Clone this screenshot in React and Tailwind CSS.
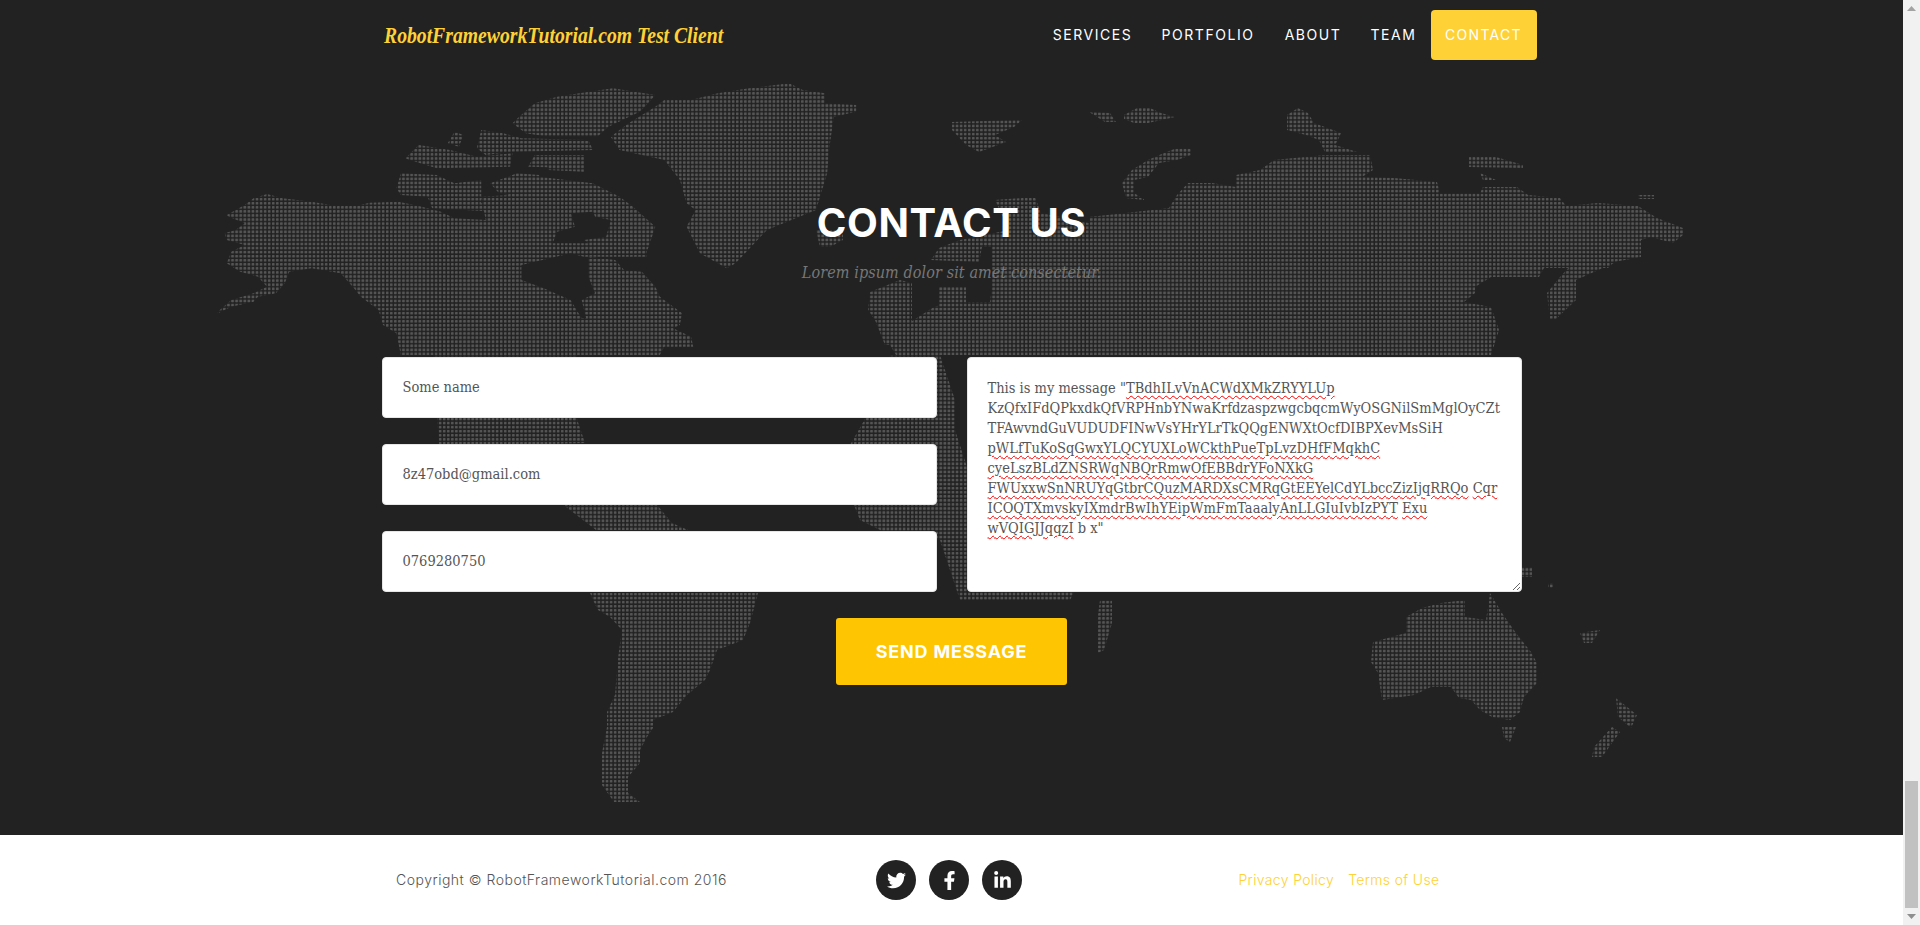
import React from "react";
import { FaTwitter, FaFacebookF, FaLinkedinIn } from "react-icons/fa";

const sans = "[font-family:Inter,sans-serif]";
const slab = "[font-family:'DejaVu_Serif_Condensed','DejaVu_Serif',serif]";

const navLinks = [
  { label: "SERVICES", width: "w-[108px]" },
  { label: "PORTFOLIO", width: "w-[123px]" },
  { label: "ABOUT", width: "w-[87px]" },
  { label: "TEAM", width: "w-[74px]" },
];

// land masses, traced from the reference (page coordinates)
const land = [
  // eurasia
  "1089,217 1126,213 1169,208 1177,195 1188,183 1212,183 1236,187 1236,175 1260,170 1274,160 1325,155 1370,155 1373,170 1362,177 1394,178 1437,182 1440,193 1480,193 1483,187 1517,187 1528,195 1560,198 1566,206 1598,203 1638,206 1657,218 1683,228 1683,235 1673,243 1651,237 1641,240 1641,257 1614,262 1608,268 1544,268 1539,277 1491,277 1475,287 1475,293 1464,302 1491,307 1499,330 1491,355 896,355 883,333 901,328 934,307 950,302 990,302 992,287 992,247 982,247 979,262 931,260 939,248 960,240 1009,230 995,200 1035,197 1041,213 1089,223",
  "939,287 966,287 966,307 939,307",
  "870,292 900,280 912,283 912,320 900,345 885,345 875,320 868,310",
  // africa
  "890,355 940,355 955,400 955,430 968,470 1000,480 1060,500 1075,590 1070,600 960,600 950,570 940,540 890,535 860,520 848,490 850,445 865,419",
  // arctic islands
  "952,122 1022,120 1014,127 995,135 1006,142 979,152 966,145 952,130",
  "1089,112 1110,113 1116,122 1105,122 1094,115",
  "1124,115 1137,108 1150,108 1161,113 1175,117 1148,123 1134,123 1124,119",
  "1177,148 1191,148 1191,155 1177,160 1159,163 1148,177 1134,180 1134,193 1145,200 1126,198 1122,183 1132,170 1148,160 1164,153",
  "1287,115 1298,108 1308,113 1314,123 1341,133 1338,140 1335,145 1357,152 1325,152 1319,140 1306,135 1287,130",
  "1469,157 1496,157 1523,165 1523,168 1469,167",
  "1480,173 1496,180 1483,180",
  "1638,195 1654,195 1654,199 1638,199",
  "1571,265 1614,263 1576,280 1576,300 1555,320 1550,320 1547,293 1560,277",
  // iceland
  "816,230 843,230 843,240 830,247 820,247",
  // central and south america
  "433,355 577,355 577,419 585,443 515,445 439,445",
  "557,500 653,500 672,523 688,530 596,530",
  "590,593 758,593 750,623 743,640 717,650 710,670 705,680 687,695 677,707 673,712 653,720 653,728 647,737 640,750 640,763 628,777 628,793 640,802 614,802 602,785 602,753 607,727 607,712 615,695 618,658 622,630 610,617 598,610 593,600",
  // oceania
  "1373,642 1406,633 1406,617 1422,608 1441,603 1465,600 1465,617 1486,620 1490,593 1502,613 1516,633 1531,652 1537,663 1537,683 1524,697 1520,712 1510,720 1492,717 1480,710 1471,700 1459,698 1451,687 1431,687 1414,695 1382,700 1378,673 1371,662",
  "1502,727 1516,727 1510,742 1504,738",
  "1616,698 1637,715 1631,728 1618,717",
  "1612,727 1620,732 1602,757 1592,757 1594,747",
  "1580,633 1600,630 1592,643 1584,643",
  "1520,567 1532,567 1532,577 1520,577",
  "1548,583 1554,583 1554,588 1548,588",
  "1100,600 1112,600 1112,623 1104,650 1098,653 1098,615",
];

// north america and greenland, in the crop coordinates they were read from
const north = [
  "60,405 100,375 120,355 150,342 185,355 250,365 305,378 350,378 380,368 445,365 490,378 540,395 570,415 640,420 700,405 760,395 830,395 840,440 800,455 790,490 830,520 720,555 720,600 770,625 830,660 855,715 865,715 855,660 885,640 870,590 870,530 930,540 950,570 990,575 1020,620 1030,650 1080,700 1075,735 1060,745 1100,770 1105,800 1040,800 1030,825 450,825 440,760 410,735 400,690 360,650 345,625 315,580 250,565 200,575 190,610 170,640 130,650 120,665 70,680 40,700 40,695 70,660 120,640 150,620 130,590 90,575 60,550 70,515 100,495 60,480 55,460 80,450 100,430 65,410",
  "760,350 760,290 880,310 940,350 970,380 1020,440 1000,520 920,525 910,490 870,490 860,480 910,470 920,420 885,410 870,360 760,370",
  "790,490 1000,490 1000,530 860,530 830,520",
  "630,350 760,340 880,360 880,395 640,420",
  "440,325 450,280 530,285 570,310 630,300 630,370 660,370 670,395 520,385 510,350 450,345",
  "650,310 710,280 760,285 760,340 720,350 670,340",
  "460,235 490,195 560,210 620,230 700,220 695,260 530,265 470,240",
  "555,190 570,155 590,165 580,200",
  "620,205 630,150 680,160 720,175 870,180 880,210 700,215 640,225",
  "735,260 750,225 860,225 860,275 780,270 780,262",
  "920,170 960,130 1020,80 1040,60 1100,60 1160,40 1230,25 1320,10 1350,30 1400,40 1400,70 1470,75 1470,95 1420,110 1410,200 1405,280 1380,390 1270,450 1200,550 1180,565 1120,520 1090,440 1110,390 1090,370 1075,300 1040,240 940,210",
  "700,130 715,110 750,70 800,50 850,40 925,25 1020,45 1000,75 985,95 915,140 890,170 780,170 730,160",
];

function WorldMap() {
  return (
    <svg className="absolute inset-0" width="1903" height="835" aria-hidden="true">
      <defs>
        <pattern id="dots" x="589.4" y="592.7" width="4.07" height="4.07" patternUnits="userSpaceOnUse">
          <rect width="2.7" height="2.7" rx="0.6" fill="#555555" />
        </pattern>
        <clipPath id="land">
          {land.map((points) => (
            <polygon key={points} points={points} />
          ))}
          {north.map((points) => (
            <polygon key={points} points={points} transform="translate(200 80) scale(0.4464 0.3333)" />
          ))}
        </clipPath>
      </defs>
      <rect width="1903" height="835" fill="url(#dots)" clipPath="url(#land)" />
    </svg>
  );
}

const Squiggle = ({ children }) => (
  <span className="underline decoration-wavy decoration-[#ff0000] decoration-1 underline-offset-2">{children}</span>
);

const Field = ({ children }) => (
  <div className={`h-[61px] flex items-center px-5 bg-white border border-[#e6e6e6] rounded text-[14.5px] text-[#555] ${slab}`}>
    {children}
  </div>
);

function Message() {
  return (
    <div className={`h-[235px] p-5 bg-white border border-[#e6e6e6] rounded text-[14.5px] leading-5 text-[#555] whitespace-nowrap resize overflow-hidden ${slab}`}>
      <div>
        This is my message "<Squiggle>TBdhILvVnACWdXMkZRYYLUp</Squiggle>
      </div>
      <div>KzQfxIFdQPkxdkQfVRPHnbYNwaKrfdzaspzwgcbqcmWyOSGNilSmMglOyCZt</div>
      <div>TFAwvndGuVUDUDFINwVsYHrYLrTkQQgENWXtOcfDIBPXevMsSiH</div>
      <div>
        <Squiggle>pWLfTuKoSqGwxYLQCYUXLoWCkthPueTpLvzDHfFMqkhC</Squiggle>
      </div>
      <div>
        <Squiggle>cyeLszBLdZNSRWqNBQrRmwOfEBBdrYFoNXkG</Squiggle>
      </div>
      <div>
        <Squiggle>FWUxxwSnNRUYqGtbrCQuzMARDXsCMRqGtEEYelCdYLbccZizIjqRRQo</Squiggle> <Squiggle>Cqr</Squiggle>
      </div>
      <div>
        <Squiggle>ICOQTXmvskyIXmdrBwIhYEipWmFmTaaalyAnLLGIuIvbIzPYT</Squiggle> <Squiggle>Exu</Squiggle>
      </div>
      <div>
        <Squiggle>wVQIGJJqqzI</Squiggle> b x"
      </div>
    </div>
  );
}

function Scrollbar() {
  return (
    <div className="w-[17px] h-full bg-[#f1f1f1] flex flex-col items-center">
      <svg width="9" height="5" viewBox="0 0 9 5" className="mt-[6px]">
        <path d="M0 5 L4.5 0 L9 5 Z" fill="#a3a3a3" />
      </svg>
      <div className="w-[13px] h-[127px] mt-[770px] bg-[#c1c1c1]"></div>
      <svg width="9" height="5" viewBox="0 0 9 5" className="mt-[6px]">
        <path d="M0 0 L9 0 L4.5 5 Z" fill="#8f8f8f" />
      </svg>
    </div>
  );
}

export default function App() {
  return (
    <div className="flex h-screen overflow-hidden bg-white">
      <div className="flex-1 min-w-0">
        <section className="relative h-[835px] bg-[#222222]">
          <WorldMap />
          <div className="relative w-[1170px] mx-auto">
            <nav className="flex items-center justify-between h-[70px]">
              <div className="pl-[17px]">
                <a href="#top" className="block origin-left scale-x-[0.82] whitespace-nowrap text-[#fed136] text-[24px] font-bold italic [font-family:'Liberation_Serif',serif]">
                  RobotFrameworkTutorial.com Test Client
                </a>
              </div>
              <ul className={`flex items-center text-sm text-white ${sans}`}>
                {navLinks.map((link) => (
                  <li key={link.label} className={`${link.width} text-center tracking-[1.55px]`}>
                    {link.label}
                  </li>
                ))}
                <li className="w-[106px] h-[50px] flex items-center justify-center bg-[#fed136] rounded tracking-[1.3px]">
                  CONTACT
                </li>
              </ul>
            </nav>

            <div className="pt-[128px] text-center">
              <h2 className={`h-[49px] leading-[49px] text-[40px] font-bold text-white tracking-[0.6px] ${sans}`}>CONTACT US</h2>
              <p className={`mt-[14px] h-[24px] leading-[24px] text-[16px] italic tracking-[0.1px] text-[#777] ${slab}`}>
                Lorem ipsum dolor sit amet consectetur.
              </p>
            </div>

            <form className="mt-[72px] px-[15px]">
              <div className="grid grid-cols-2 gap-[30px]">
                <div className="flex flex-col gap-[26px]">
                  <Field>Some name</Field>
                  <Field>8z47obd@gmail.com</Field>
                  <Field>0769280750</Field>
                </div>
                <Message />
              </div>
              <div className="mt-[26px] flex justify-center">
                <button type="button" className={`w-[231px] h-[67px] bg-[#fec503] rounded-[3px] text-white text-[18px] font-bold tracking-[0.8px] ${sans}`}>
                  SEND MESSAGE
                </button>
              </div>
            </form>
          </div>
        </section>

        <footer className={`h-[90px] bg-white ${sans}`}>
          <div className="w-[1170px] h-full mx-auto grid grid-cols-3 items-center text-center text-sm">
            <span className="text-[#555] font-light tracking-[0.5px]">Copyright © RobotFrameworkTutorial.com 2016</span>
            <div className="flex justify-center gap-[13px] pr-[5px]">
              <a href="#t" className="w-10 h-10 rounded-full bg-[#222222] text-white flex items-center justify-center text-[19px]"><FaTwitter /></a>
              <a href="#f" className="w-10 h-10 rounded-full bg-[#222222] text-white flex items-center justify-center text-[19px]"><FaFacebookF /></a>
              <a href="#l" className="w-10 h-10 rounded-full bg-[#222222] text-white flex items-center justify-center text-[19px]"><FaLinkedinIn /></a>
            </div>
            <div className="flex justify-center gap-[14px] text-[#fed136] font-light tracking-[0.35px] pr-[5px]">
              <a href="#p">Privacy Policy</a>
              <a href="#u">Terms of Use</a>
            </div>
          </div>
        </footer>
      </div>
      <Scrollbar />
    </div>
  );
}
